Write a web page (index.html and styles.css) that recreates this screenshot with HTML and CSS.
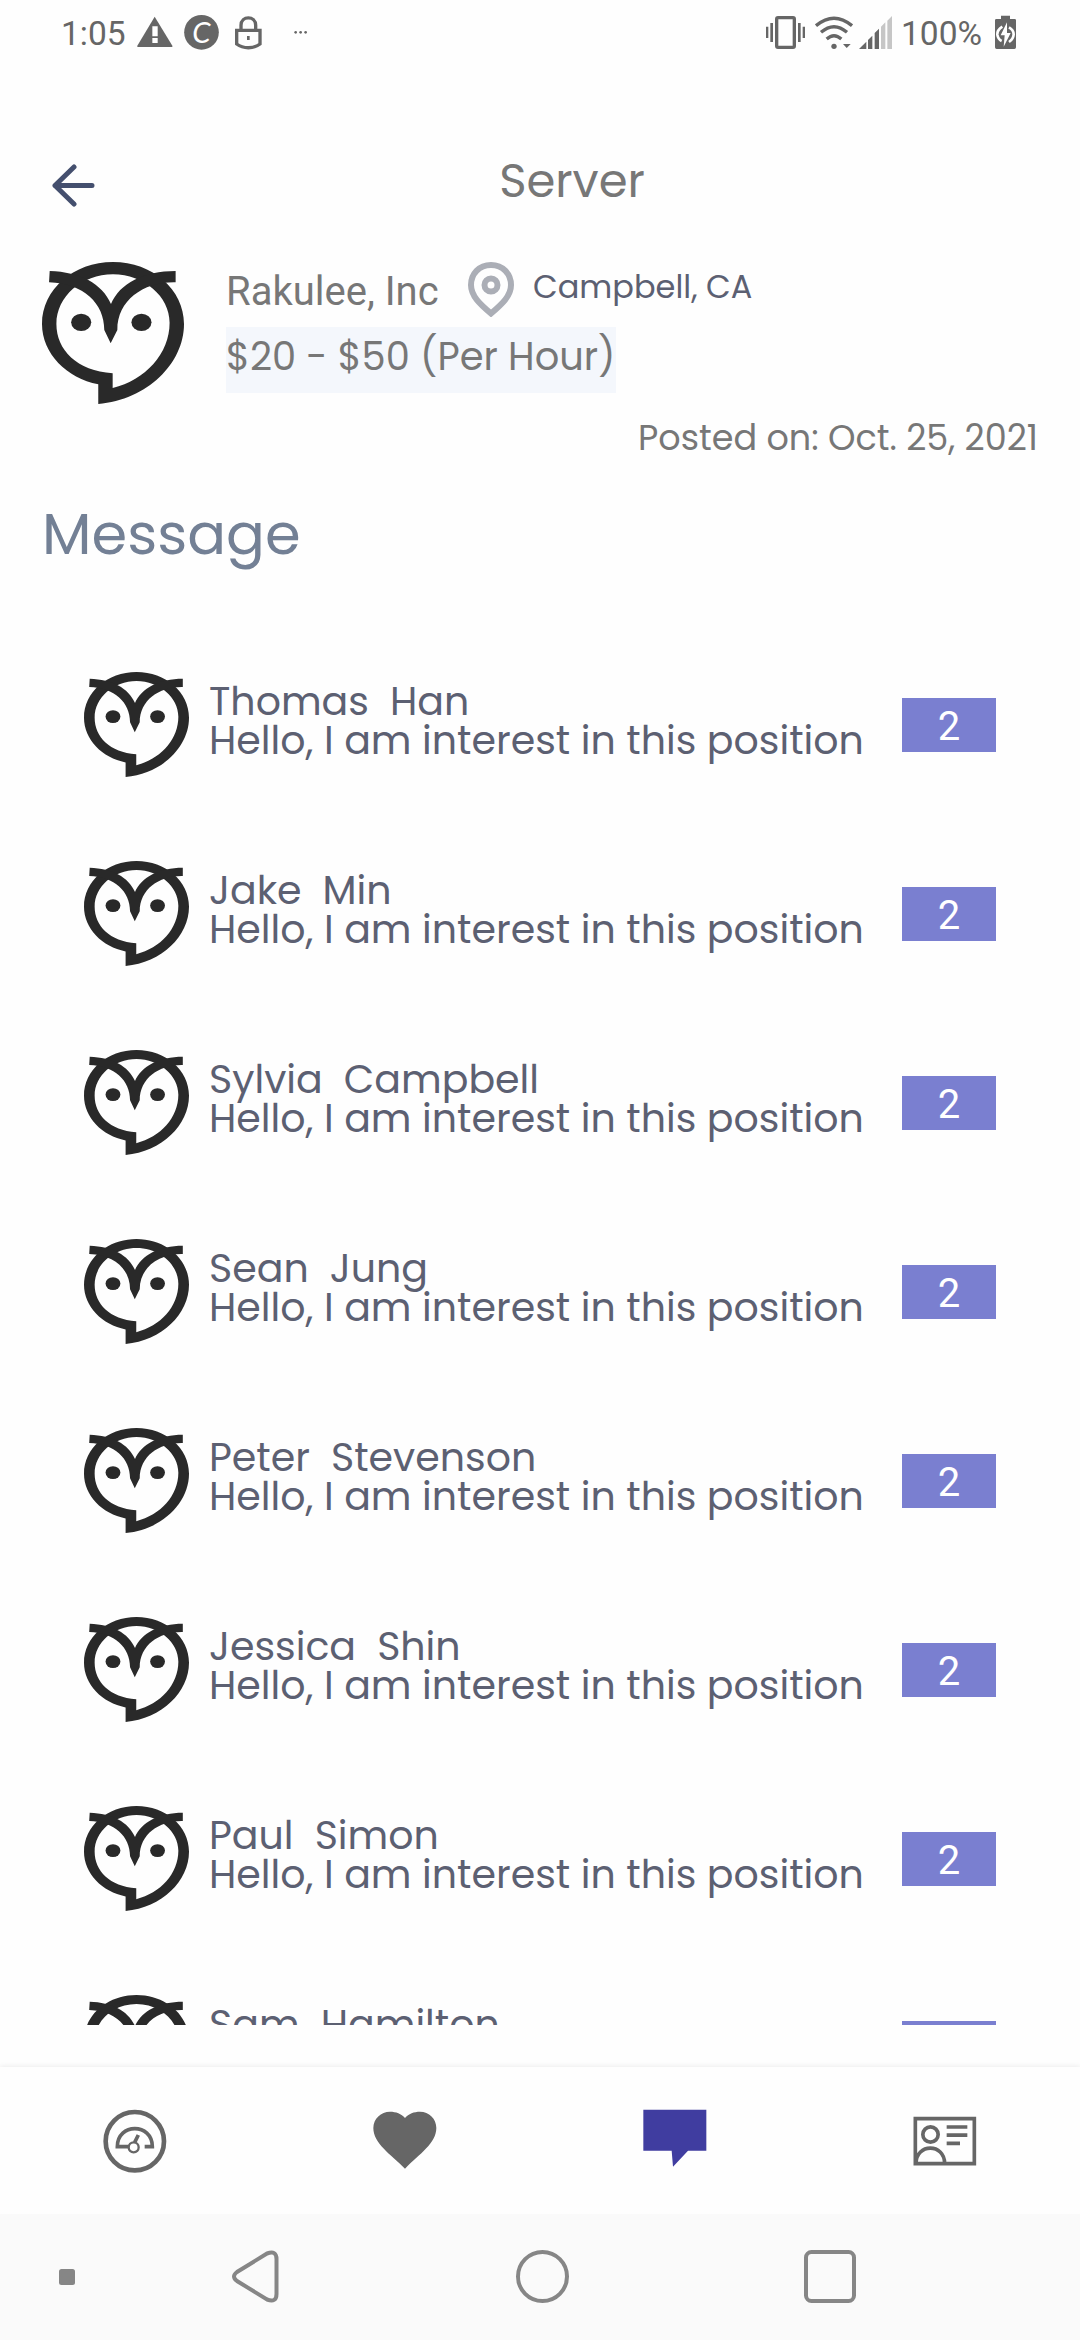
FILE: index.html
```html
<!DOCTYPE html>
<html lang="en">
<head>
    <meta charset="UTF-8">
    <meta name="viewport" content="width=device-width, initial-scale=1.0">
    <title>Server - Messages</title>
    <link rel="stylesheet" href="styles.css">
</head>
<body>
    <!-- shared owl logo -->
    <svg class="defs">
        <symbol id="owl" viewBox="36 36 424 426" preserveAspectRatio="none">
            <path fill-rule="evenodd" d="M204 462V403C110 385 36 310 36 222C36 118 130 36 248 36C366 36 460 118 460 222C460 340 350 450 204 462ZM247 414C345 390 417 310 417 218C417 140 341 73 248 73C155 73 79 140 79 222C79 300 140 362 247 370Z"/>
            <path d="M59 63C150 66 215 100 242 162C268 100 340 63 435 63V97C340 95 261 150 261 240L241 280L222 240C222 160 160 100 57 97Z"/>
            <ellipse cx="153" cy="217" rx="30" ry="26"/>
            <ellipse cx="333" cy="217" rx="30" ry="26"/>
        </symbol>
    </svg>

    <div class="status-bar">
        <span class="time">1:05</span>
        <svg class="icon-warning" viewBox="290 0 107 198">
            <path d="M343 50L396 137V141H291V137Z"/>
            <path fill="#fff" d="M336 79H352V109H336ZM336 114H352V129H336Z"/>
        </svg>
        <svg class="icon-circle" viewBox="432 0 105 198">
            <circle cx="484.500" cy="97" r="52"/>
            <text x="484" y="128" text-anchor="middle">C</text>
        </svg>
        <svg class="icon-lock" viewBox="585 0 80 198">
            <path class="line" d="M603 90V76C603 46 647 46 647 76V90M590 91H660V132C640 147 610 147 590 132Z"/>
            <rect x="621" y="108" width="8" height="12"/>
        </svg>
        <svg class="icon-dots" viewBox="760 0 40 198">
            <circle cx="765" cy="97" r="4"/><circle cx="780" cy="97" r="4"/><circle cx="795" cy="97" r="4"/>
        </svg>
        <div class="status-right">
            <svg class="icon-vibrate" viewBox="48 0 117 198">
                <rect class="line" x="80" y="53" width="53" height="89" rx="4"/>
                <path d="M48 80H55V114H48ZM61 69H69V126H61ZM144 69H152V126H144ZM158 80H165V114H158Z"/>
            </svg>
            <svg class="icon-wifi" viewBox="194 0 114 198">
                <path class="line" d="M197 77Q251 32 305 77M212 97Q251 63 290 97M229 117Q251 97 273 117"/>
                <circle cx="251" cy="139" r="8"/>
                <path d="M278 132H301L289 144Z"/>
            </svg>
            <svg class="icon-signal" viewBox="327 0 99 198">
                <path d="M327 147L349 125V147ZM354 120L367 107V147H354ZM374 99L387 86V147H374Z"/>
                <path class="faded" d="M393 80L406 67V147H393ZM412 62L426 48V147H412Z"/>
            </svg>
            <span class="percent">100%</span>
            <svg class="icon-battery" viewBox="735 0 63 198">
                <path d="M753 47H780V57H794Q798 57 798 61V142Q798 147 793 147H740Q735 147 735 142V61Q735 57 739 57H753Z"/>
                <path class="charge" d="M757 80Q741 90 742 104Q744 118 755 123M777 82Q791 90 791 103Q790 117 777 126"/>
                <path fill="#fff" d="M771 67L752 106H764L761 140L782 99H771Z"/>
            </svg>
        </div>
    </div>

    <div class="header">
        <svg class="back" viewBox="0 0 43 43">
            <path d="M22 3L3 21.500L22 40M3 21.500H40"/>
        </svg>
        <h1>Server</h1>
    </div>

    <div class="job">
        <svg class="job-logo"><use href="#owl"/></svg>
        <div class="job-info">
            <div class="company">
                <span class="company-name">Rakulee, Inc</span>
                <svg class="pin" viewBox="0 0 46 55">
                    <path d="M23 3C11 3 3 12 3 23C3 34 12 42 23 51.500C34 42 43 34 43 23C43 12 35 3 23 3Z"/>
                    <circle cx="23" cy="23" r="6.500"/>
                </svg>
                <span class="city">Campbell, CA</span>
            </div>
            <div class="pay">$20 - $50 (Per Hour)</div>
        </div>
    </div>
    <div class="posted">Posted on: Oct. 25, 2021</div>

    <h2>Message</h2>

    <div class="messages" id="messages"></div>

    <div class="tab-bar">
        <div class="tab">
            <svg width="64" height="64" viewBox="128 445 192 192">
                <circle class="ring" cx="223.500" cy="541.500" r="87.500"/>
                <path class="gauge" d="M204 558H171C171 486 276 486 276 558H253M223 545L234 523"/>
                <circle class="needle" cx="220" cy="560" r="15"/>
            </svg>
        </div>
        <div class="tab">
            <svg width="64" height="64" viewBox="938 445 192 192">
                <path d="M1034 624C990 580 939 548 939 502C939 474 962 453 989 453C1007 453 1023 459 1034 472C1045 459 1061 453 1079 453C1106 453 1128 474 1128 502C1128 548 1077 580 1034 624Z"/>
            </svg>
        </div>
        <div class="tab active">
            <svg width="64" height="64" viewBox="248 445 192 192">
                <path d="M249 447H438V570H383L338 618L334 570H249Z"/>
            </svg>
        </div>
        <div class="tab">
            <svg width="64" height="64" viewBox="1058 445 192 192">
                <path class="card" d="M1065 474H1242V609H1065ZM1067 609C1067 547 1153 547 1153 609M1159 499H1221M1159 523.500H1221M1159 548H1199"/>
                <circle class="card" cx="1110.500" cy="521.500" r="23"/>
            </svg>
        </div>
    </div>

    <div class="nav-bar">
        <svg class="nav-dot" viewBox="0 0 16 16"><rect width="16" height="16" rx="2.500"/></svg>
        <svg class="nav-back" viewBox="0 0 47 53"><path d="M35 3.500L5 22Q-1 26.500 5 31L35 49.500Q44.500 53 44.500 44V9Q44.500 0 35 3.500Z"/></svg>
        <svg class="nav-home" viewBox="0 0 53 53"><circle cx="26.500" cy="26.500" r="24.500"/></svg>
        <svg class="nav-recent" viewBox="0 0 52 53"><rect x="2" y="2" width="48" height="49" rx="5.500"/></svg>
    </div>

    <script>
        const people = ['Thomas  Han', 'Jake  Min', 'Sylvia  Campbell', 'Sean  Jung', 'Peter  Stevenson', 'Jessica  Shin', 'Paul  Simon', 'Sam  Hamilton'];

        document.getElementById('messages').innerHTML = people.map(name => `
            <div class="message">
                <svg class="avatar"><use href="#owl"/></svg>
                <div class="message-text">
                    <p class="name">${name}</p>
                    <p class="preview">Hello, I am interest in this position</p>
                </div>
                <span class="count">2</span>
            </div>`).join('');
    </script>
</body>
</html>
```
FILE: styles.css
```css
* {
    box-sizing: border-box;
}

body {
    margin: 0;
    width: 1080px;
    height: 2340px;
    display: flex;
    flex-direction: column;
    overflow: hidden;
    background-color: #fefefe;
    color: #777777;
    font-family: Poppins, Inter, sans-serif;
}

h1, h2, p {
    margin: 0;
    font-weight: 400;
}

svg {
    flex-shrink: 0;
}

.defs {
    position: absolute;
    width: 0;
    height: 0;
}

/* Android status bar */
.status-bar {
    height: 66px;
    display: flex;
    flex-shrink: 0;
    padding-left: 61px;
    padding-right: 64px;
    color: #666666;
    fill: #666666;
    font-family: Roboto, sans-serif;
    font-size: 33.5px;
    line-height: 67px;
}

.status-bar svg {
    height: 66px;
}

.status-bar .line {
    fill: none;
    stroke: #666666;
    stroke-width: 10;
}

.time {
    width: 65px;
}

.icon-warning {
    width: 35.7px;
    margin-left: 11px;
}

.icon-circle {
    width: 35px;
    margin-left: 11.5px;
}

.icon-circle text {
    fill: #ffffff;
    font-family: Lato, sans-serif;
    font-size: 88px;
    font-style: italic;
}

.icon-lock {
    width: 26.7px;
    margin-left: 16px;
}

.icon-dots {
    width: 13.3px;
    margin-left: 32px;
}

.status-right {
    display: flex;
    margin-left: auto;
}

.icon-vibrate {
    width: 39px;
}

.icon-wifi {
    width: 38px;
    margin-left: 10px;
}

.icon-signal {
    width: 33px;
    margin-left: 6px;
}

.faded {
    fill: #c6c6c6;
}

.percent {
    width: 82px;
    margin-left: 9px;
}

.icon-battery {
    width: 21px;
    margin-left: 12px;
}

.charge {
    fill: none;
    stroke: #ffffff;
    stroke-width: 8;
}

/* Header */
.header {
    height: 119px;
    margin-top: 60px;
    padding-left: 52px;
    padding-right: 31px;
    display: flex;
    flex-shrink: 0;
    align-items: center;
}

.back {
    width: 43px;
    height: 43px;
    fill: none;
    stroke: #444f6e;
    stroke-width: 5;
    stroke-linecap: round;
    stroke-linejoin: round;
}

.header h1 {
    flex: 1;
    margin-bottom: 10px;
    font-size: 46.5px;
    line-height: 56px;
    text-align: center;
}

/* Job summary */
.job {
    display: flex;
    padding: 17px 42px 0;
}

.job-logo {
    width: 142px;
    height: 142px;
    fill: #292929;
}

.job-info {
    margin-left: 42px;
}

.company {
    height: 65px;
    display: flex;
    line-height: 55px;
}

.company-name {
    width: 242px;
    padding-top: 2px;
    font-family: Roboto, sans-serif;
    font-size: 40px;
}

.pin {
    width: 46px;
    height: 55px;
    fill: none;
    stroke: #abaeb6;
    stroke-width: 6;
}

.city {
    margin-left: 19px;
    margin-top: -3px;
    color: #5c6072;
    font-size: 32px;
}

.pay {
    width: 390px;
    height: 66px;
    background-color: #f4f7fc;
    font-size: 38.4px;
    line-height: 59px;
    white-space: nowrap;
}

.posted {
    margin: 14px 42px 0;
    font-size: 35px;
    line-height: 40px;
    text-align: right;
}

h2 {
    margin-top: 43px;
    padding-left: 42px;
    color: #738095;
    font-size: 57.5px;
    line-height: 66px;
}

/* Message list */
.messages {
    height: 1395px;
    margin-top: 63px;
    padding: 0 84px;
    flex-shrink: 0;
    overflow: hidden;
}

.message {
    height: 189px;
    display: flex;
    align-items: center;
}

.avatar {
    width: 105px;
    height: 105px;
    fill: #292929;
}

.message-text {
    flex: 1;
    margin-left: 20px;
    margin-bottom: 8px;
    color: #5c6072;
    font-size: 39.5px;
    line-height: 39px;
}

.message-text p {
    white-space: pre;
}

.count {
    width: 94px;
    height: 54px;
    background-color: #7a7fd0;
    color: #ffffff;
    font-family: Roboto, sans-serif;
    font-size: 40px;
    line-height: 58px;
    text-align: center;
}

/* Bottom tabs */
.tab-bar {
    height: 147px;
    margin-top: 42px;
    display: flex;
    flex-shrink: 0;
    align-items: center;
    background-color: #fefefe;
    box-shadow: 0 -1px 5px rgba(0, 0, 0, 0.07);
    fill: #666666;
}

.tab {
    flex: 1;
    display: flex;
    justify-content: center;
}

.tab.active {
    fill: #403da0;
}

.ring, .gauge, .needle, .card {
    fill: none;
    stroke: #666666;
    stroke-width: 14;
}

.gauge {
    stroke-width: 11;
}

.needle {
    fill: #fefefe;
    stroke-width: 7;
}

.card {
    stroke-width: 11;
}

/* Android navigation bar */
.nav-bar {
    height: 126px;
    display: flex;
    flex-shrink: 0;
    align-items: center;
    padding-left: 59px;
    background-color: #fafafa;
    fill: none;
    stroke: #868686;
    stroke-width: 4;
}

.nav-dot {
    width: 16px;
    height: 16px;
    fill: #868686;
    stroke: none;
}

.nav-back {
    width: 47px;
    height: 53px;
    margin-left: 157px;
    margin-bottom: 2px;
}

.nav-home {
    width: 53px;
    height: 53px;
    margin-left: 237px;
    margin-bottom: 2px;
}

.nav-recent {
    width: 52px;
    height: 53px;
    margin-left: 235px;
    margin-bottom: 2px;
}
```
